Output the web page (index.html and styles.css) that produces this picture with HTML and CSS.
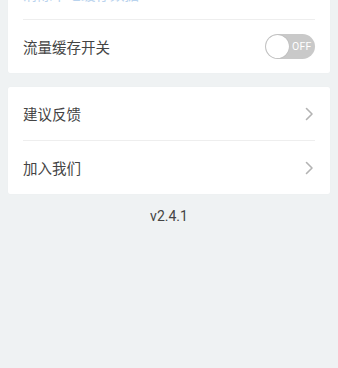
FILE: index.html
```html
<!DOCTYPE html>
<html lang="zh">
<head>
<meta charset="utf-8">
<link rel="stylesheet" href="styles.css">
</head>
<body>
<div class="page">
  <div class="card card-first">
    <div class="row row-hidden">
      <span class="label label-link">清除本地缓存数据</span>
      <span class="value">12.36 MB</span>
    </div>
    <div class="divider"></div>
    <div class="row">
      <span class="label">流量缓存开关</span>
      <span class="switch"><span class="knob"></span><span class="switch-text">OFF</span></span>
    </div>
  </div>
  <div class="card">
    <div class="row">
      <span class="label">建议反馈</span>
      <svg class="chev" width="10" height="14" viewBox="0 0 10 14"><path d="M2.5 1.5 L8 7 L2.5 12.5" fill="none" stroke="#b3b3b3" stroke-width="1.6" stroke-linecap="round" stroke-linejoin="round"/></svg>
    </div>
    <div class="divider"></div>
    <div class="row">
      <span class="label">加入我们</span>
      <svg class="chev" width="10" height="14" viewBox="0 0 10 14"><path d="M2.5 1.5 L8 7 L2.5 12.5" fill="none" stroke="#b3b3b3" stroke-width="1.6" stroke-linecap="round" stroke-linejoin="round"/></svg>
    </div>
  </div>
  <div class="version">v2.4.1</div>
</div>
</body>
</html>
```
FILE: styles.css
```css
html, body {
  margin: 0;
  padding: 0;
  background: #eff2f3;
  height: 100%;
  overflow: hidden;
}
.page {
  padding: 0 8px;
  font-family: Roboto, "Noto Sans CJK SC", sans-serif;
}
.card {
  background: #ffffff;
  border-radius: 2px;
  box-shadow: 0 0 1px rgba(0,0,0,0.06);
  padding: 0 15px;
  margin-top: 14px;
}
.card-first {
  margin-top: -34px;
}
.row {
  height: 53px;
  display: flex;
  align-items: center;
  justify-content: space-between;
}
.row-hidden {
  box-sizing: border-box;
  padding-top: 1px;
}
.label {
  font-size: 14.5px;
  color: #444444;
  font-family: "Noto Sans CJK SC", sans-serif;
}
.label-link {
  color: #b9d3ee;
}
.value {
  font-size: 13px;
  color: #d2d2d2;
  margin-right: 25px;
}
.divider {
  height: 1px;
  background: #eeeeee;
}
.switch {
  width: 50px;
  height: 25px;
  border-radius: 13px;
  background: #c9c9c9;
  display: flex;
  align-items: center;
  box-sizing: border-box;
  padding: 0 1px;
}
.knob {
  width: 23px;
  height: 23px;
  border-radius: 50%;
  background: #ffffff;
  box-shadow: 0 0 1px rgba(0,0,0,0.3);
}
.switch-text {
  color: #ffffff;
  font-size: 10.5px;
  font-weight: 400;
  margin-left: 3px;
  letter-spacing: 0.2px;
}
.chev {
  display: block;
  margin-right: 1px;
}
.version {
  text-align: center;
  font-size: 14px;
  color: #444444;
  margin-top: 14px;
  line-height: 16px;
}
```
